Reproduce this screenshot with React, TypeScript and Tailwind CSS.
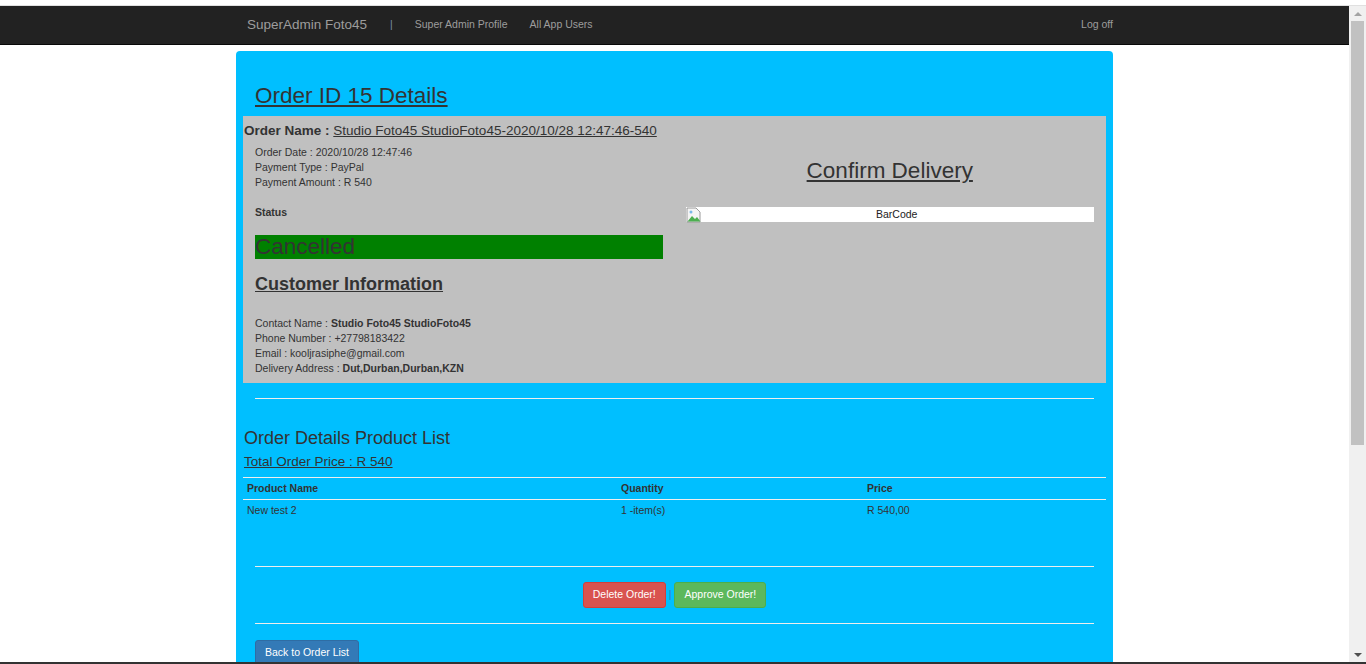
import React from "react";

function BrokenImg() {
  return (
    <svg width="16" height="16" viewBox="0 0 16 16" className="shrink-0">
      <path d="M1 1h9l4 4v10H1z" fill="#f4f4f4" stroke="#9a9a9a" strokeWidth="1" />
      <path d="M1.5 14.5 L6 9 L9 12 L11 10 L14.5 14.5 Z" fill="#4caf50" />
      <circle cx="5" cy="5" r="1.5" fill="#7ab8e8" />
    </svg>
  );
}

export default function App() {
  return (
    <div
      className="w-[1366px] h-[664px] overflow-hidden flex flex-col bg-white text-[#333]"
      style={{ fontFamily: '"Liberation Sans", Arial, sans-serif' }}
    >
      <div className="h-[6px] bg-white border-b border-[#e0e0e0] shrink-0" />
      <div className="flex flex-1 min-h-0">
        <div className="flex-1 min-w-0 flex flex-col">
          <nav className="h-[39px] shrink-0 bg-[#222] border-b border-[#080808]">
            <div className="w-[877px] mx-auto h-full flex items-center pl-[11px] text-[#9d9d9d]">
              <span className="text-[13.5px] w-[120px] whitespace-nowrap">SuperAdmin Foto45</span>
              <span className="text-[10.5px] ml-[23px] text-[#7a8fa3]">|</span>
              <span className="text-[10.5px] ml-[22px]">Super Admin Profile</span>
              <span className="text-[10.5px] ml-[22px]">All App Users</span>
              <span className="text-[10.5px] ml-auto">Log off</span>
            </div>
          </nav>
          <div className="mt-[6px] w-[877px] mx-auto bg-[#00bfff] rounded-[4px] px-[7px] pb-[40px]">
            <h2 className="text-[22.5px] leading-[26px] underline pt-[32px] pb-[7px] pl-[12px]">Order ID 15 Details</h2>
            <div className="bg-[#c0c0c0] pt-[7px] pb-[7px]">
              <div className="text-[13.5px] leading-[16px] pl-[1px]">
                <b>Order Name : </b>
                <span className="underline">Studio Foto45 StudioFoto45-2020/10/28 12:47:46-540</span>
              </div>
              <div className="flex px-[12px] mt-[6px]">
                <div className="w-[408px] text-[10.5px] leading-[15px]">
                  <div>Order Date : 2020/10/28 12:47:46</div>
                  <div>Payment Type : PayPal</div>
                  <div>Payment Amount : R 540</div>
                  <div className="font-bold mt-[15px]">Status</div>
                  <div className="mt-[15px] bg-[#008000] h-[24px] text-[22.5px] leading-[24px] text-[#333]">Cancelled</div>
                  <div className="mt-[14px] text-[18px] leading-[22px] font-bold underline">Customer Information</div>
                  <div className="mt-[21px]">Contact Name : <b>Studio Foto45 StudioFoto45</b></div>
                  <div>Phone Number : +27798183422</div>
                  <div>Email : kooljrasiphe@gmail.com</div>
                  <div>Delivery Address : <b>Dut,Durban,Durban,KZN</b></div>
                </div>
                <div className="ml-[23px] w-[409px] flex flex-col">
                  <div className="text-center text-[22.5px] leading-[26px] underline mt-[13px]">Confirm Delivery</div>
                  <div className="mt-[23px] bg-white h-[15px] flex items-center relative">
                    <BrokenImg />
                    <span className="absolute inset-0 pl-[14px] text-center text-[10.5px] leading-[15px] text-[#222]">BarCode</span>
                  </div>
                </div>
              </div>
            </div>
            <div className="mx-[12px] mt-[15px] border-t border-[#eee]" />
            <div className="text-[18px] leading-[20px] mt-[29px] pl-[1px]">Order Details Product List</div>
            <div className="text-[13.5px] leading-[16px] underline mt-[6px] pl-[1px]">Total Order Price : R 540</div>
            <table className="w-full mt-[7px] text-[10.5px] border-collapse">
              <thead>
                <tr className="border-t border-b border-[#eee]">
                  <th className="text-left font-bold py-[5px] pl-[4px] w-[378px] leading-[11px]">Product Name</th>
                  <th className="text-left font-bold py-[5px] w-[246px] leading-[11px]">Quantity</th>
                  <th className="text-left font-bold py-[5px] leading-[11px]">Price</th>
                </tr>
              </thead>
              <tbody>
                <tr>
                  <td className="py-[5px] pl-[4px] leading-[11px]">New test 2</td>
                  <td className="py-[5px] leading-[11px]">1 -item(s)</td>
                  <td className="py-[5px] leading-[11px]">R 540,00</td>
                </tr>
              </tbody>
            </table>
            <div className="mx-[12px] mt-[45px] border-t border-[#eee]" />
            <div className="flex justify-center items-center mt-[15px] gap-[3px]">
              <button className="bg-[#d9534f] border border-[#d43f3a] text-white text-[10.5px] rounded-[3px] h-[26px] px-[9px]">Delete Order!</button>
              <span className="text-[#337ab7] text-[10.5px]">|</span>
              <button className="bg-[#5cb85c] border border-[#4cae4c] text-white text-[10.5px] rounded-[3px] h-[26px] px-[9px]">Approve Order!</button>
            </div>
            <div className="mx-[12px] mt-[15px] border-t border-[#eee]" />
            <div className="px-[12px] mt-[15px]">
              <button className="bg-[#337ab7] border border-[#2e6da4] text-white text-[10.5px] rounded-[3px] h-[26px] px-[9px]">Back to Order List</button>
            </div>
          </div>
        </div>
        <div className="w-[17px] shrink-0 bg-[#f0f0f0] flex flex-col items-center">
          <div className="h-[15px] flex items-center justify-center">
            <div className="w-0 h-0 border-l-[4px] border-r-[4px] border-b-[4px] border-l-transparent border-r-transparent border-b-[#a3a3a3]" />
          </div>
          <div className="w-[13px] h-[424px] bg-[#c1c1c1]" />
          <div className="flex-1" />
          <div className="h-[15px] flex items-center justify-center">
            <div className="w-0 h-0 border-l-[4px] border-r-[4px] border-t-[4px] border-l-transparent border-r-transparent border-t-[#505050]" />
          </div>
        </div>
      </div>
      <div className="h-[2px] bg-[#333] shrink-0" />
    </div>
  );
}
